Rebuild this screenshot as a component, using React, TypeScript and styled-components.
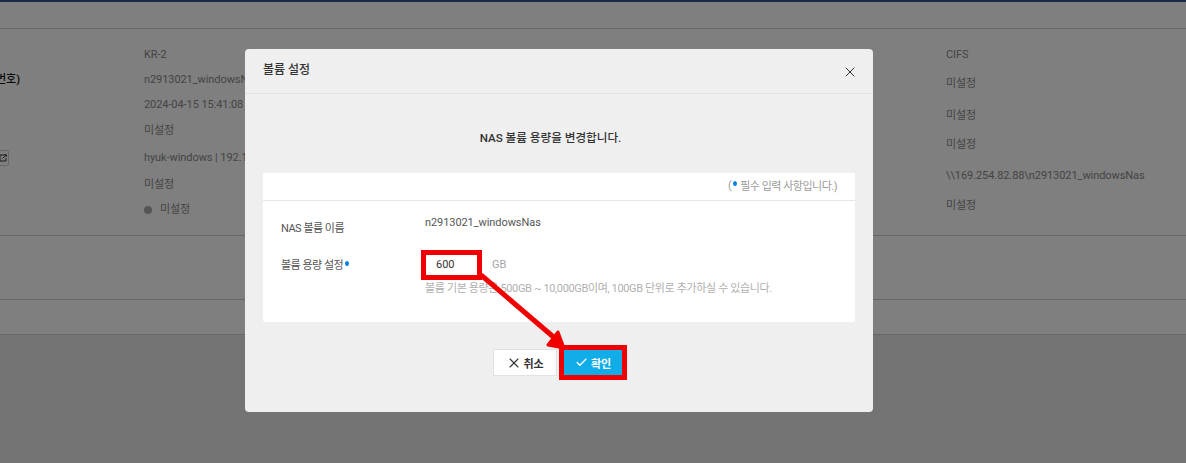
import React from 'react';
import styled, { createGlobalStyle } from 'styled-components';
import { X, Check } from 'lucide-react';

const GlobalStyle = createGlobalStyle`
  html, body {
    margin: 0;
    padding: 0;
    width: 1186px;
    height: 463px;
    overflow: hidden;
    background: #e8e8e8;
    font-family: Roboto, "Noto Sans CJK KR", sans-serif;
  }
`;

const Page = styled.div`
  position: relative;
  width: 1186px;
  height: 463px;
  overflow: hidden;
`;

const TopBar = styled.div`
  height: 2px;
  background: #3a5290;
`;

const Toolbar = styled.div`
  height: 26px;
  background: #ffffff;
  border-bottom: 1px solid #cfcfcf;
`;

const DetailGrid = styled.div`
  display: grid;
  grid-template-columns: 144px 802px 1fr;
  height: 206px;
  background: #ffffff;
  border-bottom: 1px solid #cfcfcf;
`;

const ClippedColumn = styled.div`
  display: flex;
  flex-direction: column;
  align-items: flex-start;
  overflow: hidden;
`;

const ClippedLabel = styled.span`
  margin: 43px 0 0 -4px;
  font-size: 11px;
  line-height: 16px;
  font-weight: 500;
  color: #111111;
  white-space: nowrap;
`;

const LinkButton = styled.span`
  display: flex;
  align-items: center;
  justify-content: flex-end;
  margin: 62px 0 0 -14px;
  width: 23px;
  height: 16px;
  box-sizing: border-box;
  padding-right: 1px;
  border: 1px solid #cccccc;
  border-radius: 2px;
`;

const ValueColumn = styled.div`
  padding-top: 17px;
`;

const Value = styled.div<{ $h: number }>`
  display: flex;
  align-items: flex-start;
  gap: 8px;
  height: ${p => p.$h}px;
  font-size: 11px;
  letter-spacing: -0.08px;
  line-height: 18px;
  color: #888888;
  white-space: nowrap;
`;

const StatusDot = styled.i`
  width: 8px;
  height: 8px;
  margin-top: 5px;
  border-radius: 50%;
  background: #aaaaaa;
`;

const EmptyRow = styled.div<{ $h: number }>`
  height: ${p => p.$h}px;
  background: #ffffff;
  border-bottom: 1px solid #cfcfcf;
`;

const Backdrop = styled.div`
  position: absolute;
  inset: 0;
  background: rgba(0, 0, 0, 0.5);
  padding: 49px 0 0 245px;
`;

const Modal = styled.div`
  position: relative;
  width: 628px;
  height: 363px;
  background: #efefef;
  border-radius: 4px;
`;

const ModalHeader = styled.div`
  display: flex;
  align-items: center;
  justify-content: space-between;
  height: 44px;
  padding: 0 18px;
  border-bottom: 1px solid #e2e2e2;
`;

const ModalTitle = styled.h2`
  margin: 0 0 5px;
  font-size: 12px;
  font-weight: 500;
  color: #333333;
`;

const CloseButton = styled.button`
  display: flex;
  padding: 0;
  margin: 2px -3px 0 0;
  border: 0;
  background: none;
  color: #333333;
`;

const Intro = styled.p`
  margin: 0;
  padding: 37px 17px 0 0;
  height: 42px;
  font-size: 11.6px;
  line-height: 15px;
  font-weight: 500;
  text-align: center;
  color: #333333;
`;

const Card = styled.div`
  margin: 0 18px;
  height: 149px;
  background: #ffffff;
  border-radius: 2px;
`;

const CardNote = styled.div`
  display: flex;
  align-items: center;
  justify-content: flex-end;
  height: 24px;
  padding: 0 18px 3px 0;
  border-bottom: 1px solid #e6e6e6;
  font-size: 11px;
  letter-spacing: -0.5px;
  color: #9a9a9a;
`;

const RequiredDot = styled.i`
  display: inline-block;
  width: 4px;
  height: 5px;
  border-radius: 50%;
  background: #0a7fe0;
  margin: 0 3px 3px 2px;
`;

const FormGrid = styled.div`
  display: grid;
  grid-template-columns: 144px 1fr;
  padding: 14px 0 0 18px;
`;

const FieldLabel = styled.div<{ $h: number; $top: number }>`
  height: ${p => p.$h}px;
  font-size: 11px;
  letter-spacing: -0.5px;
  line-height: 16px;
  padding-top: ${p => p.$top}px;
  box-sizing: border-box;
  color: #555555;
`;

const NameValue = styled.div`
  height: 36px;
  font-size: 11px;
  letter-spacing: -0.08px;
  line-height: 16px;
  color: #555555;
`;

const InputRow = styled.div`
  display: flex;
  align-items: center;
  gap: 11px;
  height: 28px;
  margin-top: -1px;
`;

const SizeInput = styled.input`
  width: 56px;
  height: 24px;
  box-sizing: border-box;
  padding: 0 0 0 11px;
  border: 0;
  outline: 0;
  background: #ffffff;
  font: 11px Roboto, sans-serif;
  color: #333333;
`;

const Unit = styled.span`
  font-size: 11px;
  color: #a5a5a5;
`;

const Help = styled.div`
  margin-top: 3px;
  font-size: 11px;
  letter-spacing: -0.36px;
  line-height: 16px;
  color: #b0b0b0;
  white-space: nowrap;
`;

const Actions = styled.div`
  display: flex;
  justify-content: center;
  gap: 6px;
  margin: 27px 0 0 -2px;
`;

const ActionButton = styled.button<{ $primary?: boolean }>`
  display: flex;
  align-items: center;
  justify-content: center;
  gap: ${p => (p.$primary ? 3 : 1)}px;
  width: ${p => (p.$primary ? 60 : 64)}px;
  height: 27px;
  padding: 0;
  border: ${p => (p.$primary ? '0' : '1px solid #e2e2e2')};
  background: ${p => (p.$primary ? '#11ade8' : '#ffffff')};
  color: ${p => (p.$primary ? '#ffffff' : '#333333')};
  font-family: inherit;
  font-size: 11px;
  font-weight: 700;
`;

const RedBox = styled.div`
  position: absolute;
  box-sizing: border-box;
  border: 5px solid #f00000;
`;

const InputMark = styled(RedBox)`
  left: 176px;
  top: 201px;
  width: 61px;
  height: 30px;
`;

const ConfirmMark = styled(RedBox)`
  left: 314px;
  top: 296px;
  width: 68px;
  height: 35px;
`;

const Arrow = styled.svg`
  position: absolute;
  left: 0;
  top: 0;
  pointer-events: none;
`;

const LEFT_ROWS: Array<[string, number]> = [
  ['KR-2', 25], ['n2913021_windowsNas', 25], ['2024-04-15 15:41:08', 26], ['미설정', 27],
  ['hyuk-windows | 192.168.0.21', 27], ['미설정', 25],
];
const RIGHT_ROWS: Array<[string, number]> = [
  ['CIFS', 29], ['미설정', 32], ['미설정', 29], ['미설정', 31],
  ['\\\\169.254.82.88\\n2913021_windowsNas', 30], ['미설정', 25],
];

export default function App() {
  return (
    <Page>
      <GlobalStyle />
      <TopBar />
      <Toolbar />
      <DetailGrid>
        <ClippedColumn>
          <ClippedLabel>번호)</ClippedLabel>
          <LinkButton>
            <svg width="8" height="8" viewBox="0 0 8 8" fill="none" stroke="#333" strokeWidth="1">
              <path d="M5 1H1v6h6V4M3.5 4.5L7 1M5 .7h2.3V3" />
            </svg>
          </LinkButton>
        </ClippedColumn>
        <ValueColumn>
          {LEFT_ROWS.map(([text, h], i) => (
            <Value key={i} $h={h}>{text}</Value>
          ))}
          <Value $h={25}><StatusDot />미설정</Value>
        </ValueColumn>
        <ValueColumn>
          {RIGHT_ROWS.map(([text, h], i) => (
            <Value key={i} $h={h}>{text}</Value>
          ))}
        </ValueColumn>
      </DetailGrid>
      <EmptyRow $h={63} />
      <EmptyRow $h={34} />
      <Backdrop>
        <Modal>
          <ModalHeader>
            <ModalTitle>볼륨 설정</ModalTitle>
            <CloseButton><X size={16} strokeWidth={1.5} /></CloseButton>
          </ModalHeader>
          <Intro>NAS 볼륨 용량을 변경합니다.</Intro>
          <Card>
            <CardNote>(<RequiredDot />필수 입력 사항입니다.)</CardNote>
            <FormGrid>
              <FieldLabel $h={36} $top={6}>NAS 볼륨 이름</FieldLabel>
              <NameValue>n2913021_windowsNas</NameValue>
              <FieldLabel $h={40} $top={7}>볼륨 용량 설정<RequiredDot /></FieldLabel>
              <div>
                <InputRow>
                  <SizeInput defaultValue="600" />
                  <Unit>GB</Unit>
                </InputRow>
                <Help>볼륨 기본 용량은 500GB ~ 10,000GB이며, 100GB 단위로 추가하실 수 있습니다.</Help>
              </div>
            </FormGrid>
          </Card>
          <Actions>
            <ActionButton><X size={16} strokeWidth={1.6} />취소</ActionButton>
            <ActionButton $primary><Check size={13} strokeWidth={2.6} />확인</ActionButton>
          </Actions>
          <Arrow width="628" height="363" viewBox="0 0 628 363">
            <path d="M236 226L312 291" stroke="#f00000" strokeWidth="5" fill="none" />
            <path d="M319 299L303 296L313 283Z" fill="#f00000" stroke="#f00000" strokeWidth="3" strokeLinejoin="round" />
          </Arrow>
          <InputMark />
          <ConfirmMark />
        </Modal>
      </Backdrop>
    </Page>
  );
}
